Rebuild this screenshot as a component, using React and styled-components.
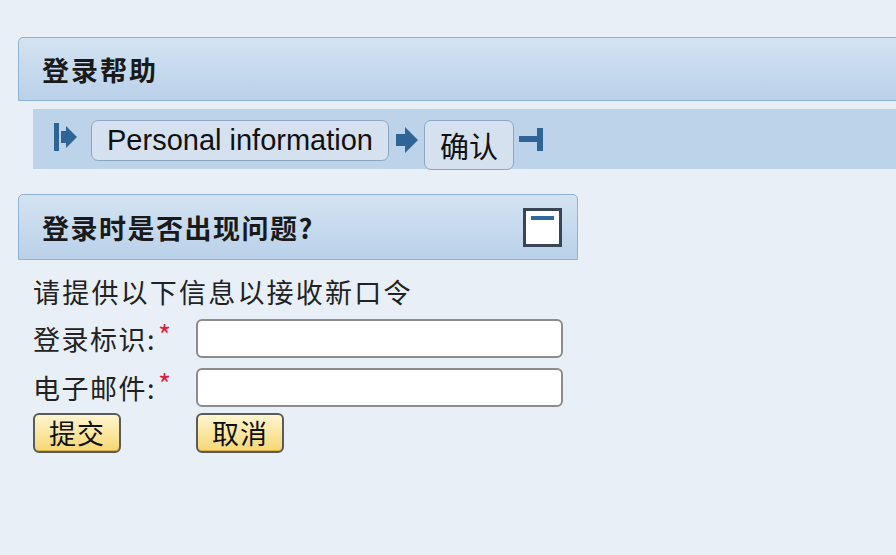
import React from "react";
import styled, { createGlobalStyle } from "styled-components";

const GlobalStyle = createGlobalStyle`
  html, body {
    margin: 0;
    padding: 0;
    background: #e9eff6;
    overflow: hidden;
  }
  body {
    font-family: "Liberation Sans", "Noto Sans CJK SC", sans-serif;
    color: #1a1a1a;
  }
`;

const Page = styled("div")`
  width: 896px;
  height: 555px;
  padding: 37px 0 0 18px;
  box-sizing: border-box;
  overflow: hidden;
`;

const TitleBar = styled("div")`
  height: 64px;
  box-sizing: border-box;
  margin-right: -30px;
  display: flex;
  align-items: center;
  padding-left: 23px;
  border: 1px solid #8fb1d4;
  border-radius: 5px 0 0 0;
  background: linear-gradient(#d4e3f2, #bad1e9);
  font-family: "Noto Sans CJK SC", sans-serif;
  font-weight: bold;
  font-size: 27px;
  letter-spacing: 2px;
`;

const Roadmap = styled("div")`
  margin: 8px -30px 0 15px;
  height: 60px;
  box-sizing: border-box;
  display: flex;
  align-items: flex-start;
  padding: 11px 0 0 21px;
  background: #bcd3ea;
`;

const StepIcon = styled("svg")`
  flex: none;
  margin-top: ${(props) => props.top}px;
  margin-right: ${(props) => props.gap}px;
  fill: #2e6596;
`;

const StepButton = styled("div")`
  padding: 3px 15px;
  margin-right: ${(props) => props.gap}px;
  border: 1.5px solid #8ea6c0;
  border-radius: 7px;
  background: #d5e1ee;
  font-size: 29px;
  color: #111;
`;

const Panel = styled("div")`
  margin-top: 25px;
  width: 560px;
  height: 66px;
  box-sizing: border-box;
  display: flex;
  align-items: center;
  justify-content: space-between;
  padding: 0 15px 0 23px;
  border: 1px solid #8fb1d4;
  border-radius: 5px 5px 0 0;
  background: linear-gradient(#d4e3f2, #bad1e9);
  font-family: "Noto Sans CJK SC", sans-serif;
  font-weight: bold;
  font-size: 27px;
  letter-spacing: 1.5px;
`;

const Content = styled("div")`
  margin: 12px 0 0 15px;
  font-family: "Noto Sans CJK SC", sans-serif;
  font-size: 27px;
  letter-spacing: 1.5px;
  color: #222;
`;

const Intro = styled("div")`
  line-height: 40px;
  letter-spacing: 2.2px;
`;

const FormGrid = styled("div")`
  margin-top: 7px;
  display: grid;
  grid-template-columns: 163px 367px;
  row-gap: 10px;
  align-items: center;
`;

const Label = styled("label")`
  line-height: 30px;
  white-space: nowrap;
`;

const Required = styled("span")`
  color: #e0213c;
  font-size: 28px;
  line-height: 0;
  vertical-align: 4px;
  margin-left: 2px;
`;

const Input = styled("input")`
  height: 39px;
  box-sizing: border-box;
  border: 2px solid #8c8c8c;
  border-radius: 6px;
  background: #fff;
  outline: none;
`;

const ButtonRow = styled("div")`
  grid-column: span 2;
  display: grid;
  grid-template-columns: 163px auto;
  margin-top: -4px;
`;

const ActionButton = styled("button")`
  justify-self: start;
  height: 40px;
  padding: 0 14px;
  border: 2px solid #5b5b5b;
  border-radius: 6px;
  background: linear-gradient(#fff6cf, #f6d774);
  font-family: "Noto Sans CJK SC", sans-serif;
  font-size: 27px;
  line-height: 34px;
  letter-spacing: 1px;
  color: #111;
  box-shadow: inset 0 -1px 0 #d9b24a;
`;

const CollapseIcon = () => (
  <svg width="39" height="39" viewBox="0 0 39 39">
    <rect x="1.5" y="1.5" width="36" height="36" fill="#fff" stroke="#3a4656" strokeWidth="3" />
    <rect x="8" y="8" width="23" height="4" fill="#2f69a2" />
  </svg>
);

export default function App() {
  return (
    <>
      <GlobalStyle />
      <Page>
        <TitleBar>登录帮助</TitleBar>
        <Roadmap>
          <StepIcon width="23" height="28" viewBox="0 0 23 28" top={3} gap={14}>
            <rect x="0" y="0" width="5" height="28" />
            <path d="M7 8 H12 V3 L23 14 L12 25 V20 H7 Z" />
          </StepIcon>
          <StepButton gap={7}>Personal information</StepButton>
          <StepIcon width="22" height="26" viewBox="0 0 22 26" top={7} gap={6}>
            <path d="M0 7 H9 V0 L22 13 L9 26 V19 H0 Z" />
          </StepIcon>
          <StepButton gap={5}>确认</StepButton>
          <StepIcon width="25" height="24" viewBox="0 0 25 24" top={8} gap={0}>
            <rect x="0" y="8" width="19" height="6" />
            <rect x="18" y="0" width="6" height="23" />
          </StepIcon>
        </Roadmap>
        <Panel>
          <span>登录时是否出现问题?</span>
          <CollapseIcon />
        </Panel>
        <Content>
          <Intro>请提供以下信息以接收新口令</Intro>
          <FormGrid>
            <Label>
              登录标识:<Required>*</Required>
            </Label>
            <Input />
            <Label>
              电子邮件:<Required>*</Required>
            </Label>
            <Input />
            <ButtonRow>
              <ActionButton>提交</ActionButton>
              <ActionButton>取消</ActionButton>
            </ButtonRow>
          </FormGrid>
        </Content>
      </Page>
    </>
  );
}
